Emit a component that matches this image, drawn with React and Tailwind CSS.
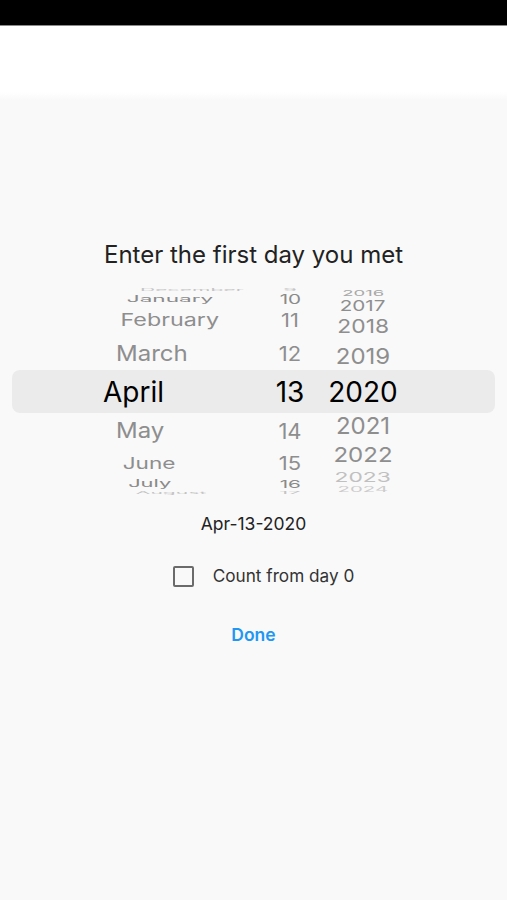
import React, { useState } from 'react';

const font = 'font-["Inter","Liberation_Sans",sans-serif]';

// wheel rows above / below the selected band, listed top to bottom
const monthsTop = [
  { label: 'December', row: 'h-[10px]', text: 'text-[#c4c4c4] ml-[30px] scale-x-[0.88] scale-y-[0.12]' },
  { label: 'January', row: 'h-[8px]', text: 'text-[#8a8a8a] ml-[21px] scale-x-[0.94] scale-y-[0.38]' },
  { label: 'February', row: 'h-[34px]', text: 'text-[#8e8e8e] ml-[16px] scale-x-[0.97] scale-y-[0.71]' },
  { label: 'March', row: 'h-[33px]', text: 'text-[#8e8e8e] ml-[13px] scale-y-[0.92]' },
];
const monthsBottom = [
  { label: 'May', row: 'h-[36px]', text: 'text-[#8e8e8e] ml-[13px] scale-y-[0.88]' },
  { label: 'June', row: 'h-[28px]', text: 'text-[#8e8e8e] ml-[18px] scale-x-[0.94] scale-y-[0.69]' },
  { label: 'July', row: 'h-[14px]', text: 'text-[#8a8a8a] ml-[23px] scale-x-[0.91] scale-y-[0.4]' },
  { label: 'August', row: 'h-[4px]', text: 'text-[#c4c4c4] ml-[28px] scale-x-[0.88] scale-y-[0.12]' },
];
const daysTop = [
  { label: '9', row: 'h-[10px]', text: 'text-[#c4c4c4] scale-y-[0.15]' },
  { label: '10', row: 'h-[8px]', text: 'text-[#8a8a8a] scale-x-[0.94] scale-y-[0.58]' },
  { label: '11', row: 'h-[34px]', text: 'text-[#8e8e8e] scale-y-[0.85]' },
  { label: '12', row: 'h-[33px]', text: 'text-[#8e8e8e] scale-y-[0.9]' },
];
const daysBottom = [
  { label: '14', row: 'h-[36px]', text: 'text-[#8e8e8e] scale-y-[0.97]' },
  { label: '15', row: 'h-[28px]', text: 'text-[#8e8e8e] scale-y-[0.87]' },
  { label: '16', row: 'h-[14px]', text: 'text-[#8a8a8a] scale-x-[0.94] scale-y-[0.5]' },
  { label: '17', row: 'h-[4px]', text: 'text-[#c4c4c4] scale-y-[0.15]' },
];
const yearsTop = [
  { label: '2016', row: 'h-[18px]', text: 'text-[#a8a8a8] scale-x-[0.77] scale-y-[0.33]' },
  { label: '2017', row: 'h-[8px]', text: 'text-[#8e8e8e] scale-x-[0.86] scale-y-[0.63]' },
  { label: '2018', row: 'h-[34px]', text: 'text-[#8e8e8e] scale-x-[0.95] scale-y-[0.8]' },
  { label: '2019', row: 'h-[26px]', text: 'text-[#8e8e8e] scale-y-[0.92]' },
];
const yearsBottom = [
  { label: '2021', row: 'h-[26px]', text: 'text-[#8e8e8e] scale-y-[0.97]' },
  { label: '2022', row: 'h-[32px]', text: 'text-[#8e8e8e] scale-y-[0.86]' },
  { label: '2023', row: 'h-[12px]', text: 'text-[#c0c0c0] scale-x-[0.95] scale-y-[0.57]' },
  { label: '2024', row: 'h-[14px]', text: 'text-[#cccccc] scale-x-[0.85] scale-y-[0.3]' },
];

const WheelColumn = ({ items, width, align, justify }) => (
  <div className={`flex flex-col ${width} ${justify}`}>
    {items.map((it) => (
      <div key={it.label} className={`flex items-center ${align} ${it.row}`}>
        <span className={`block whitespace-nowrap leading-none ${it.text}`}>{it.label}</span>
      </div>
    ))}
  </div>
);

const App = () => {
  const [fromZero, setFromZero] = useState(false);

  return (
    <div className={`min-h-[900px] flex flex-col bg-[#f9f9f9] ${font}`}>
      <div className="h-[26px] bg-black border-b border-[#8a8a8a]" />
      <div className="h-[66px] bg-white" />
      <div className="h-[8px] bg-gradient-to-b from-white to-[#f9f9f9]" />

      <div className="flex flex-col items-center">
        <h1 className="mt-[140px] text-[24px] leading-[30px] text-[#222]">
          Enter the first day you met
        </h1>

        <div className="w-full mt-[14px] text-[24px]">
          <div className="flex h-[86px] pl-[103px]">
            <WheelColumn items={monthsTop} width="w-[160px]" align="justify-start origin-left" justify="justify-end" />
            <WheelColumn items={daysTop} width="w-[54px]" align="justify-center" justify="justify-end text-[22px]" />
            <WheelColumn items={yearsTop} width="w-[92px]" align="justify-center" justify="justify-end" />
          </div>

          <div className="mx-3 h-[43px] rounded-lg bg-[#ebebeb] flex items-center pl-[91px] text-[28px] text-black">
            <div className="w-[160px]">April</div>
            <div className="w-[54px] text-center">13</div>
            <div className="w-[92px] text-center">2020</div>
          </div>

          <div className="flex h-[84px] pl-[103px]">
            <WheelColumn items={monthsBottom} width="w-[160px]" align="justify-start" justify="justify-start" />
            <WheelColumn items={daysBottom} width="w-[54px]" align="justify-center" justify="justify-start text-[22px]" />
            <WheelColumn items={yearsBottom} width="w-[92px]" align="justify-center" justify="justify-start" />
          </div>
        </div>

        <div className="mt-[16px] text-[17.5px] leading-[22px] text-[#222]">Apr-13-2020</div>

        <label className="mt-[30px] flex items-center pl-[20px] cursor-pointer">
          <span
            onClick={() => setFromZero((v) => !v)}
            className={`w-[21px] h-[21px] rounded-[2px] border-2 ${
              fromZero ? 'bg-[#2196f3] border-[#2196f3]' : 'border-[#6b6b6b]'
            }`}
          />
          <span className="ml-[19px] text-[17.2px] leading-[22px] text-[#333]">Count from day 0</span>
        </label>

        <button className="mt-[37px] text-[17.5px] leading-[22px] font-semibold text-[#2196f3]">Done</button>
      </div>
    </div>
  );
};

export default App;
